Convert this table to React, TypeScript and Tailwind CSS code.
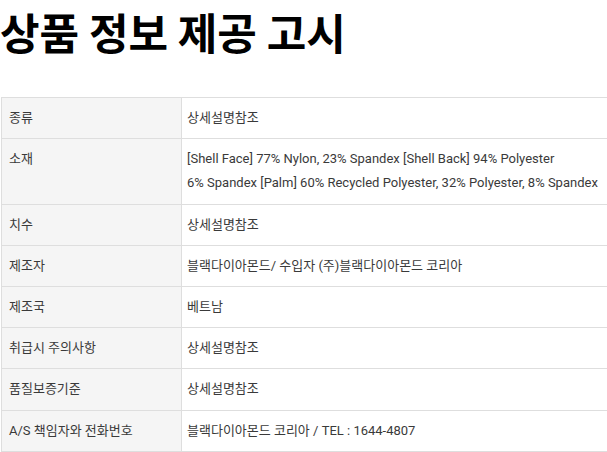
import React from "react";

const rows: { label: string; value: string[] }[] = [
  { label: "종류", value: ["상세설명참조"] },
  {
    label: "소재",
    value: [
      "[Shell Face] 77% Nylon, 23% Spandex [Shell Back] 94% Polyester",
      "6% Spandex [Palm] 60% Recycled Polyester, 32% Polyester, 8% Spandex",
    ],
  },
  { label: "치수", value: ["상세설명참조"] },
  { label: "제조자", value: ["블랙다이아몬드/ 수입자 (주)블랙다이아몬드 코리아"] },
  { label: "제조국", value: ["베트남"] },
  { label: "취급시 주의사항", value: ["상세설명참조"] },
  { label: "품질보증기준", value: ["상세설명참조"] },
  { label: "A/S 책임자와 전화번호", value: ["블랙다이아몬드 코리아 / TEL : 1644-4807"] },
];

export default function App() {
  return (
    <div
      className="w-[607px] h-[452px] overflow-hidden bg-white"
      style={{ fontFamily: "Roboto, 'Noto Sans CJK KR', sans-serif" }}
    >
      <h1
        className="pl-0 pt-[3px] text-[43px] leading-[56px] font-bold text-black"
        style={{ fontFamily: "'Noto Sans CJK KR', sans-serif" }}
      >
        상품 정보 제공 고시
      </h1>
      <div className="mt-[38px] ml-px border-t border-l border-[#dedede] text-[13px] text-[#3a3a3a]">
        {rows.map((r) => (
          <div key={r.label} className="flex border-b border-[#dedede]">
            <div className="w-[180px] shrink-0 bg-[#f5f5f5] border-r border-[#dedede] px-[7px] py-[8px] leading-[24.2px]">
              {r.label}
            </div>
            <div className="flex-1 px-[5px] py-[8px] leading-[24.2px] whitespace-nowrap">
              {r.value.map((v) => (
                <div key={v}>{v}</div>
              ))}
            </div>
          </div>
        ))}
      </div>
    </div>
  );
}
